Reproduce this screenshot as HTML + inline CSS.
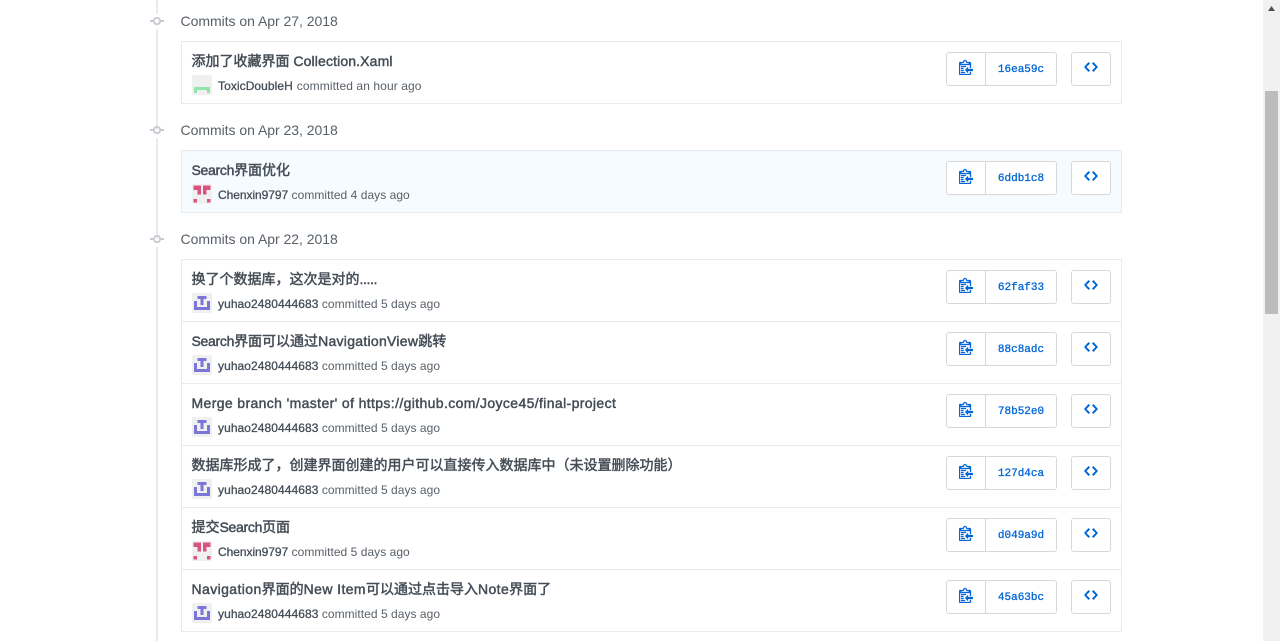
<!DOCTYPE html>
<html><head><meta charset="utf-8"><style>
html,body{margin:0;padding:0;background:#fff;overflow:hidden}
body{width:1280px;height:641px;position:relative;font-family:"Liberation Sans","Noto Sans CJK SC",sans-serif;color:#586069}
.a{position:absolute;white-space:nowrap}
.line{position:absolute;left:156px;width:2px;background:#e9ebee}
.date{position:absolute;left:180.500px;font-size:14px;line-height:20px;color:#586069;white-space:nowrap;letter-spacing:-.03px}
.box{position:absolute;left:181px;width:939px;border:1px solid #e6ebf1;background:#fff}
.row{position:relative;height:61px;border-top:1px solid #e6ebf1}
.row:first-child{border-top:0}
.t{position:absolute;left:9.500px;top:10px;font-size:14px;line-height:19px;font-weight:normal;-webkit-text-stroke:.45px #444d56;color:#444d56;white-space:nowrap}
.av{position:absolute;left:10px;top:33px;width:20px;height:20px;border-radius:2px;background:#f0f0f0;filter:blur(.25px)}
.m{position:absolute;left:36px;top:35px;font-size:12px;line-height:18px;color:#586069;white-space:nowrap;letter-spacing:.04px}
.m b{color:#444d56;font-weight:normal;-webkit-text-stroke:.3px #444d56;letter-spacing:.07px}
.m b.c{letter-spacing:-.05px}
.cp{position:absolute;left:764px;top:10px;width:38px;height:32px;border:1px solid #d6d8db;border-radius:3px 0 0 3px;background:#fff}
.sha{position:absolute;left:804px;top:10px;width:70px;height:32px;border:1px solid #d6d8db;border-left:0;border-radius:0 3px 3px 0;background:#fff;font:normal 11px/35px "Liberation Mono",monospace;-webkit-text-stroke:.3px #0366d6;color:#0366d6;text-align:center}
.co{position:absolute;left:889px;top:10px;width:38px;height:32px;border:1px solid #d6d8db;border-radius:3px;background:#fff}
svg{position:absolute;display:block}
</style></head><body>
<svg width="0" height="0" style="position:absolute"><defs>
<symbol id="cl" viewBox="0 0 14 16"><path fill="#0366d6" stroke="#0366d6" stroke-width=".3" d="M2 13h4v1H2v-1zm5-6H2v1h5V7zm2 3V8l-3 3 3 3v-2h5v-2H9zM4.500 9H2v1h2.500V9zM2 12h2.500v-1H2v1zm9 1h1v2c-.02.28-.11.52-.3.7-.19.18-.42.28-.7.3H1c-.55 0-1-.45-1-1V4c0-.55.45-1 1-1h3c0-1.110.89-2 2-2 1.110 0 2 .89 2 2h3c.55 0 1 .45 1 1v5h-1V6H1v9h10v-2zM2 5h8c0-.55-.45-1-1-1H8c-.55 0-1-.45-1-1s-.45-1-1-1-1 .45-1 1-.45 1-1 1H3c-.55 0-1 .45-1 1z"/></symbol>
<symbol id="cd" viewBox="0 0 14 16"><path fill="#0366d6" fill-rule="evenodd" d="M9.500 3L8 4.500 11.500 8 8 11.500 9.500 13 14 8 9.500 3zm-5 0L0 8l4.500 5L6 11.500 2.500 8 6 4.500 4.500 3z"/></symbol>
<symbol id="tx" viewBox="0 0 20 20"><rect width="20" height="20" fill="#f0f0f0"/><path fill="#8fe6a6" d="M2 12h16v6h-3v-3H5v3H2z"/></symbol>
<symbol id="ch" viewBox="0 0 20 20"><rect width="20" height="20" fill="#f0f0f0"/><path fill="#d9537f" d="M1.500 1.500H9v9H5.500V6h-4zM11 1.500h7.500V6h-4v4.500H11zM1.500 15H5v3.500H1.500zM15 15h3.500v3.500H15z"/></symbol>
<symbol id="yu" viewBox="0 0 20 20"><rect width="20" height="20" fill="#f0f0f0"/><path fill="#7b76d8" d="M5.500 3h9v3h-3v6h-3V6h-3zM2 8h3v6h10V8h3v9H2z"/></symbol>
<symbol id="dot" viewBox="0 0 14 14"><path fill="#c6cbd1" d="M7 3a4 4 0 0 1 3.900 3H14v2h-3.100A4 4 0 0 1 3.100 8H0V6h3.100A4 4 0 0 1 7 3zm0 1.700a2.300 2.300 0 1 0 0 4.600 2.300 2.300 0 0 0 0-4.600z"/></symbol>
</defs></svg>

<div class="line" style="top:0;height:14px"></div>
<div class="line" style="top:29px;height:101px"></div>
<div class="line" style="top:138px;height:101px"></div>
<div class="line" style="top:247px;height:394px"></div>

<svg style="left:150px;top:14px" width="14" height="14"><use href="#dot"/></svg>
<svg style="left:150px;top:123px" width="14" height="14"><use href="#dot"/></svg>
<svg style="left:150px;top:232px" width="14" height="14"><use href="#dot"/></svg>

<div class="date" style="top:11px">Commits on Apr 27, 2018</div>
<div class="date" style="top:120px">Commits on Apr 23, 2018</div>
<div class="date" style="top:229px">Commits on Apr 22, 2018</div>

<div class="box" style="top:41px">
<div class="row"><div class="t">添加了收藏界面 <span style="letter-spacing:.13px">Collection.Xaml</span></div><svg class="av" width="20" height="20"><use href="#tx"/></svg><div class="m"><b>ToxicDoubleH</b> <span style="letter-spacing:.1px;margin-left:.5px">committed an hour ago</span></div><div class="cp"><svg style="left:12px;top:6px" width="14" height="16"><use href="#cl"/></svg></div><div class="sha">16ea59c</div><div class="co"><svg style="left:12px;top:6px" width="14" height="16"><use href="#cd"/></svg></div></div>
</div>

<div class="box" style="top:150px;background:#f6fbff">
<div class="row"><div class="t"><span style="letter-spacing:-.3px">Search</span>界面优化</div><svg class="av" width="20" height="20"><use href="#ch"/></svg><div class="m"><b class="c">Chenxin9797</b> committed 4 days ago</div><div class="cp"><svg style="left:12px;top:6px" width="14" height="16"><use href="#cl"/></svg></div><div class="sha">6ddb1c8</div><div class="co"><svg style="left:12px;top:6px" width="14" height="16"><use href="#cd"/></svg></div></div>
</div>

<div class="box" style="top:259px">
<div class="row"><div class="t">换了个数据库，这次是对的<span style="letter-spacing:-.4px">.....</span></div><svg class="av" width="20" height="20"><use href="#yu"/></svg><div class="m"><b>yuhao2480444683</b> committed 5 days ago</div><div class="cp"><svg style="left:12px;top:6px" width="14" height="16"><use href="#cl"/></svg></div><div class="sha">62faf33</div><div class="co"><svg style="left:12px;top:6px" width="14" height="16"><use href="#cd"/></svg></div></div>
<div class="row"><div class="t"><span style="letter-spacing:-.3px">Search</span>界面可以通过<span style="letter-spacing:.28px">NavigationView</span>跳转</div><svg class="av" width="20" height="20"><use href="#yu"/></svg><div class="m"><b>yuhao2480444683</b> committed 5 days ago</div><div class="cp"><svg style="left:12px;top:6px" width="14" height="16"><use href="#cl"/></svg></div><div class="sha">88c8adc</div><div class="co"><svg style="left:12px;top:6px" width="14" height="16"><use href="#cd"/></svg></div></div>
<div class="row"><div class="t" style="letter-spacing:.37px">Merge branch 'master' of https://github.com/Joyce45/final-project</div><svg class="av" width="20" height="20"><use href="#yu"/></svg><div class="m"><b>yuhao2480444683</b> committed 5 days ago</div><div class="cp"><svg style="left:12px;top:6px" width="14" height="16"><use href="#cl"/></svg></div><div class="sha">78b52e0</div><div class="co"><svg style="left:12px;top:6px" width="14" height="16"><use href="#cd"/></svg></div></div>
<div class="row"><div class="t">数据库形成了，创建界面创建的用户可以直接传入数据库中（未设置删除功能）</div><svg class="av" width="20" height="20"><use href="#yu"/></svg><div class="m"><b>yuhao2480444683</b> committed 5 days ago</div><div class="cp"><svg style="left:12px;top:6px" width="14" height="16"><use href="#cl"/></svg></div><div class="sha">127d4ca</div><div class="co"><svg style="left:12px;top:6px" width="14" height="16"><use href="#cd"/></svg></div></div>
<div class="row"><div class="t">提交<span style="letter-spacing:-.3px">Search</span>页面</div><svg class="av" width="20" height="20"><use href="#ch"/></svg><div class="m"><b class="c">Chenxin9797</b> committed 5 days ago</div><div class="cp"><svg style="left:12px;top:6px" width="14" height="16"><use href="#cl"/></svg></div><div class="sha">d049a9d</div><div class="co"><svg style="left:12px;top:6px" width="14" height="16"><use href="#cd"/></svg></div></div>
<div class="row"><div class="t"><span style="letter-spacing:.4px">Navigation</span>界面的<span style="letter-spacing:.4px">New Item</span>可以通过点击导入<span style="letter-spacing:.4px">Note</span>界面了</div><svg class="av" width="20" height="20"><use href="#yu"/></svg><div class="m"><b>yuhao2480444683</b> committed 5 days ago</div><div class="cp"><svg style="left:12px;top:6px" width="14" height="16"><use href="#cl"/></svg></div><div class="sha">45a63bc</div><div class="co"><svg style="left:12px;top:6px" width="14" height="16"><use href="#cd"/></svg></div></div>
</div>

<div class="a" style="left:1263px;top:0;width:17px;height:641px;background:#f1f1f1"></div>
<div class="a" style="left:1265px;top:91px;width:13px;height:223px;background:#bcbcbc"></div>
<svg style="left:1267px;top:6px" width="9" height="6"><path d="M4.500 0L8 5H1z" fill="#505050"/></svg>
</body></html>
